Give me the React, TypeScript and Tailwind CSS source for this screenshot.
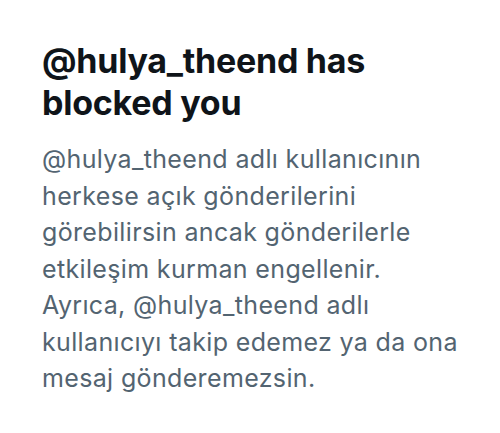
export default function App() {
  return (
    <div className="w-[500px] h-[433px] bg-white px-[42px] pt-[40px] font-['Inter',sans-serif]">
      <h1 className="text-[34px] leading-[42px] font-bold text-[#0f1419] tracking-[-0.25px]">
        @hulya_theend has blocked you
      </h1>
      <p className="mt-[17px] text-[25px] leading-[36.5px] text-[#536471] tracking-[0.35px]">
        @hulya_theend adlı kullanıcının herkese açık gönderilerini görebilirsin ancak gönderilerle
        etkileşim kurman engellenir. Ayrıca, @hulya_theend adlı kullanıcıyı takip edemez ya da ona
        mesaj gönderemezsin.
      </p>
    </div>
  );
}
